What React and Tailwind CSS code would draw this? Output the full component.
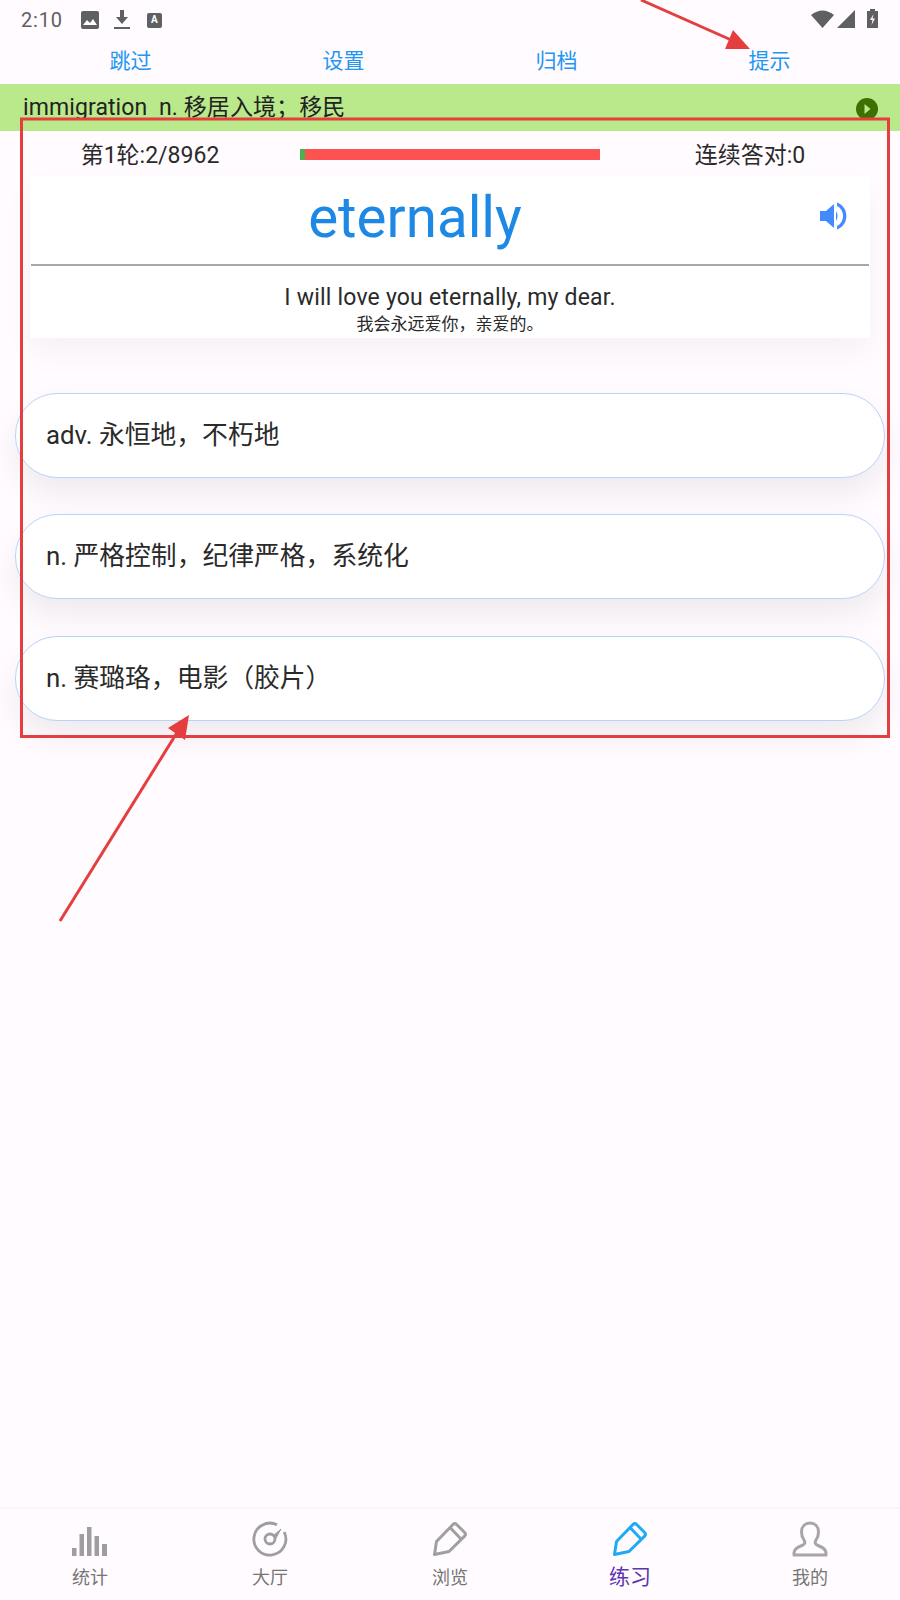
import React from 'react';

const FONT = "font-['Roboto','Noto_Sans_CJK_SC',sans-serif]";

const topActions = ['跳过', '设置', '归档', '提示'];

const options = ['adv. 永恒地，不朽地', 'n. 严格控制，纪律严格，系统化', 'n. 赛璐珞，电影（胶片）'];

const BarsIcon = () => (
  <svg className="mt-[5px]" width="36" height="30" viewBox="0 0 36 30" fill="#9e9e9e">
    <rect x="0" y="21" width="4.500" height="8" />
    <rect x="7.500" y="7" width="4.500" height="22" />
    <rect x="15" y="0" width="4.500" height="29" />
    <rect x="22.500" y="9" width="4.500" height="20" />
    <rect x="30" y="17" width="5" height="12" />
  </svg>
);

const GaugeIcon = () => (
  <svg width="36" height="36" viewBox="0 0 36 36" fill="none" stroke="#9e9e9e">
    <path d="M25 3.800A16 16 0 1 0 32.200 11" strokeWidth="2.800" />
    <circle cx="18" cy="18" r="5" strokeWidth="2.800" />
    <path d="M21 15l8-7-5 9z" fill="#9e9e9e" strokeWidth="1" />
  </svg>
);

const PenIcon = ({ color }) => (
  <svg width="36" height="36" viewBox="0 0 36 36" fill="none" stroke={color} strokeWidth="3" strokeLinejoin="round">
    <path d="M2.500 33.500l2-13L21 3.500q1.800-1.800 3.600 0l8 8q1.800 1.800 0 3.600L17 30.500z" />
    <path d="M18.500 7l10.500 11" />
  </svg>
);

const PersonIcon = () => (
  <svg width="36" height="36" viewBox="0 0 36 36" fill="none" stroke="#a6a6a6" strokeWidth="3" strokeLinejoin="round">
    <path d="M2 34v-2c0-4 4-6 8-7.500 3-1.200 3.500-3 2-5.500-2-3-2.500-5-2.500-8C9.500 5.500 13 2 18 2s8.500 3.500 8.500 9c0 3-.5 5-2.500 8-1.500 2.500-1 4.300 2 5.500 4 1.500 8 3.500 8 7.500v2z" />
  </svg>
);

const SpeakerIcon = () => (
  <svg className="absolute left-[790px] top-[26px]" width="27" height="28" viewBox="0 0 27 28" fill="#448aff">
    <path d="M0 9h6l8-7v24l-8-7H0z" />
    <path d="M16 9q3 5 0 10z" />
    <path d="M17 0.500C29.500 5 29.500 23 17 27.500v-3.500C25 20 25 8 17 4z" />
  </svg>
);

const tabs = [
  { label: '统计', icon: <BarsIcon /> },
  { label: '大厅', icon: <GaugeIcon /> },
  { label: '浏览', icon: <PenIcon color="#a0a0a0" /> },
  { label: '练习', icon: <PenIcon color="#1eaaf5" />, active: true },
  { label: '我的', icon: <PersonIcon /> }
];

const StatusBar = () => (
  <div className="h-10 flex items-center justify-between pl-[21px] pr-[20px] text-[#5f6062]">
    <div className="flex items-center">
      <span className="text-[20px] leading-none tracking-[0.8px]">2:10</span>
      <svg className="ml-[18px]" width="18" height="18" viewBox="0 0 18 18">
        <rect width="18" height="18" rx="2" fill="#5f6062" />
        <path d="M2 14l4-5 3 3 3-4 4 6z" fill="#fff" />
      </svg>
      <svg className="ml-[15px]" width="16" height="20" viewBox="0 0 16 20" fill="#5f6062">
        <path d="M6 0h4v7h4l-6 7-6-7h4z" />
        <rect x="0" y="17" width="16" height="2" />
      </svg>
      <div className="ml-[17px] w-[15px] h-[15px] bg-[#5f6062] rounded-[2px] flex items-center justify-center text-white text-[10px] font-bold leading-none">A</div>
    </div>
    <div className="flex items-center pr-[2px] pb-[3px]">
      <svg width="23" height="18" viewBox="0 0 23 18" fill="#5f6062">
        <path d="M0 5q11.500-9 23 0l-11.500 13z" />
      </svg>
      <svg className="ml-[3px]" width="18" height="18" viewBox="0 0 18 18" fill="#5f6062">
        <path d="M18 0v18H0z" />
      </svg>
      <svg className="ml-[12px]" width="11" height="19" viewBox="0 0 11 19">
        <path d="M3 0h5v2h3v17H0V2h3z" fill="#5f6062" />
        <path d="M6.500 5L3 11h2.500L4.500 16 8 9.500H5.500z" fill="#fff" />
      </svg>
    </div>
  </div>
);

const Annotations = () => (
  <svg className="absolute inset-0 pointer-events-none" width="900" height="1600" viewBox="0 0 900 1600" fill="none">
    <rect x="21.500" y="119" width="867" height="617.500" stroke="#e53e3e" strokeWidth="3" />
    <path d="M641 0L738 43" stroke="#e53e3e" strokeWidth="3" />
    <path d="M750 49H725L733 30z" fill="#e53e3e" />
    <path d="M60 921L178 731" stroke="#e53e3e" strokeWidth="3" />
    <path d="M189 715L168 728L185 740z" fill="#e53e3e" />
  </svg>
);

export default function App() {
  return (
    <div className={`${FONT} relative w-[900px] h-[1600px] bg-[#fffbfe] flex flex-col overflow-hidden`}>
      <StatusBar />

      {/* Top actions */}
      <div className="h-11 px-[24px] grid grid-cols-4 items-center text-center text-[21px] text-[#2196f3]">
        {topActions.map((action) => (
          <span key={action}>{action}</span>
        ))}
      </div>

      {/* Word of the previous round */}
      <div className="h-[47px] bg-[#b9e98a] pl-[23px] pr-[22px] pt-[2px] flex items-center justify-between text-[23px] tracking-[0.1px] text-[#222222]">
        <span className="whitespace-pre">immigration  n. 移居入境；移民</span>
        <svg width="22" height="22" viewBox="0 0 22 22">
          <circle cx="11" cy="11" r="11" fill="#3d7000" />
          <path d="M8.500 6l6 5-6 5z" fill="#b9e98a" />
        </svg>
      </div>

      {/* Progress */}
      <div className="h-[45px] pt-[2px] grid grid-cols-3 items-center text-center text-[23px] text-[#2a2a2a]">
        <span className="pt-[3px]">第1轮:2/8962</span>
        <div className="h-[11px] bg-[#fe5252] flex">
          <div className="w-[5px] bg-[#4caf50]" />
        </div>
        <span className="pt-[3px]">连续答对:0</span>
      </div>

      {/* Word card */}
      <div className="mx-[30px] h-[162px] bg-white shadow-[0_14px_30px_rgba(0,0,0,0.045)] flex flex-col">
        <div className="h-[88px] relative flex items-center justify-center pr-[70px] pb-[4px]">
          <span className="text-[56.500px] leading-none text-[#1e88e5]">eternally</span>
          <SpeakerIcon />
        </div>
        <div className="mx-px h-[2px] bg-[#a8a8a8]" />
        <div className="flex-1 flex flex-col items-center pt-[19px]">
          <span className="text-[23px] leading-[26px] tracking-[0.2px] text-[#2a2a2a]">I will love you eternally, my dear.</span>
          <span className="text-[17px] leading-[27px] text-[#2a2a2a]">我会永远爱你，亲爱的。</span>
        </div>
      </div>

      {/* Options */}
      <div className="mt-[55px] mx-[15px] flex flex-col gap-[36.300px]">
        {options.map((option) => (
          <div
            key={option}
            className="h-[85px] rounded-[42px] bg-white border border-[#b9d4fb] pl-[30px] flex items-center text-[25.800px] text-[#2a2a2a] shadow-[0_16px_32px_rgba(0,0,0,0.07)]"
          >
            {option}
          </div>
        ))}
      </div>

      {/* Bottom tabs */}
      <div className="mt-auto h-[93px] border-t-2 border-[#f8f4f7] grid grid-cols-5">
        {tabs.map((tab) => (
          <div key={tab.label} className="flex flex-col items-center pt-[12px]">
            <div className="h-[36px] flex items-center justify-center">{tab.icon}</div>
            <span className={tab.active ? 'mt-[7px] text-[21px] leading-[26px] text-[#5e35b1]' : 'mt-[9px] text-[18px] leading-[24px] text-[#757575]'}>
              {tab.label}
            </span>
          </div>
        ))}
      </div>

      <Annotations />
    </div>
  );
}
